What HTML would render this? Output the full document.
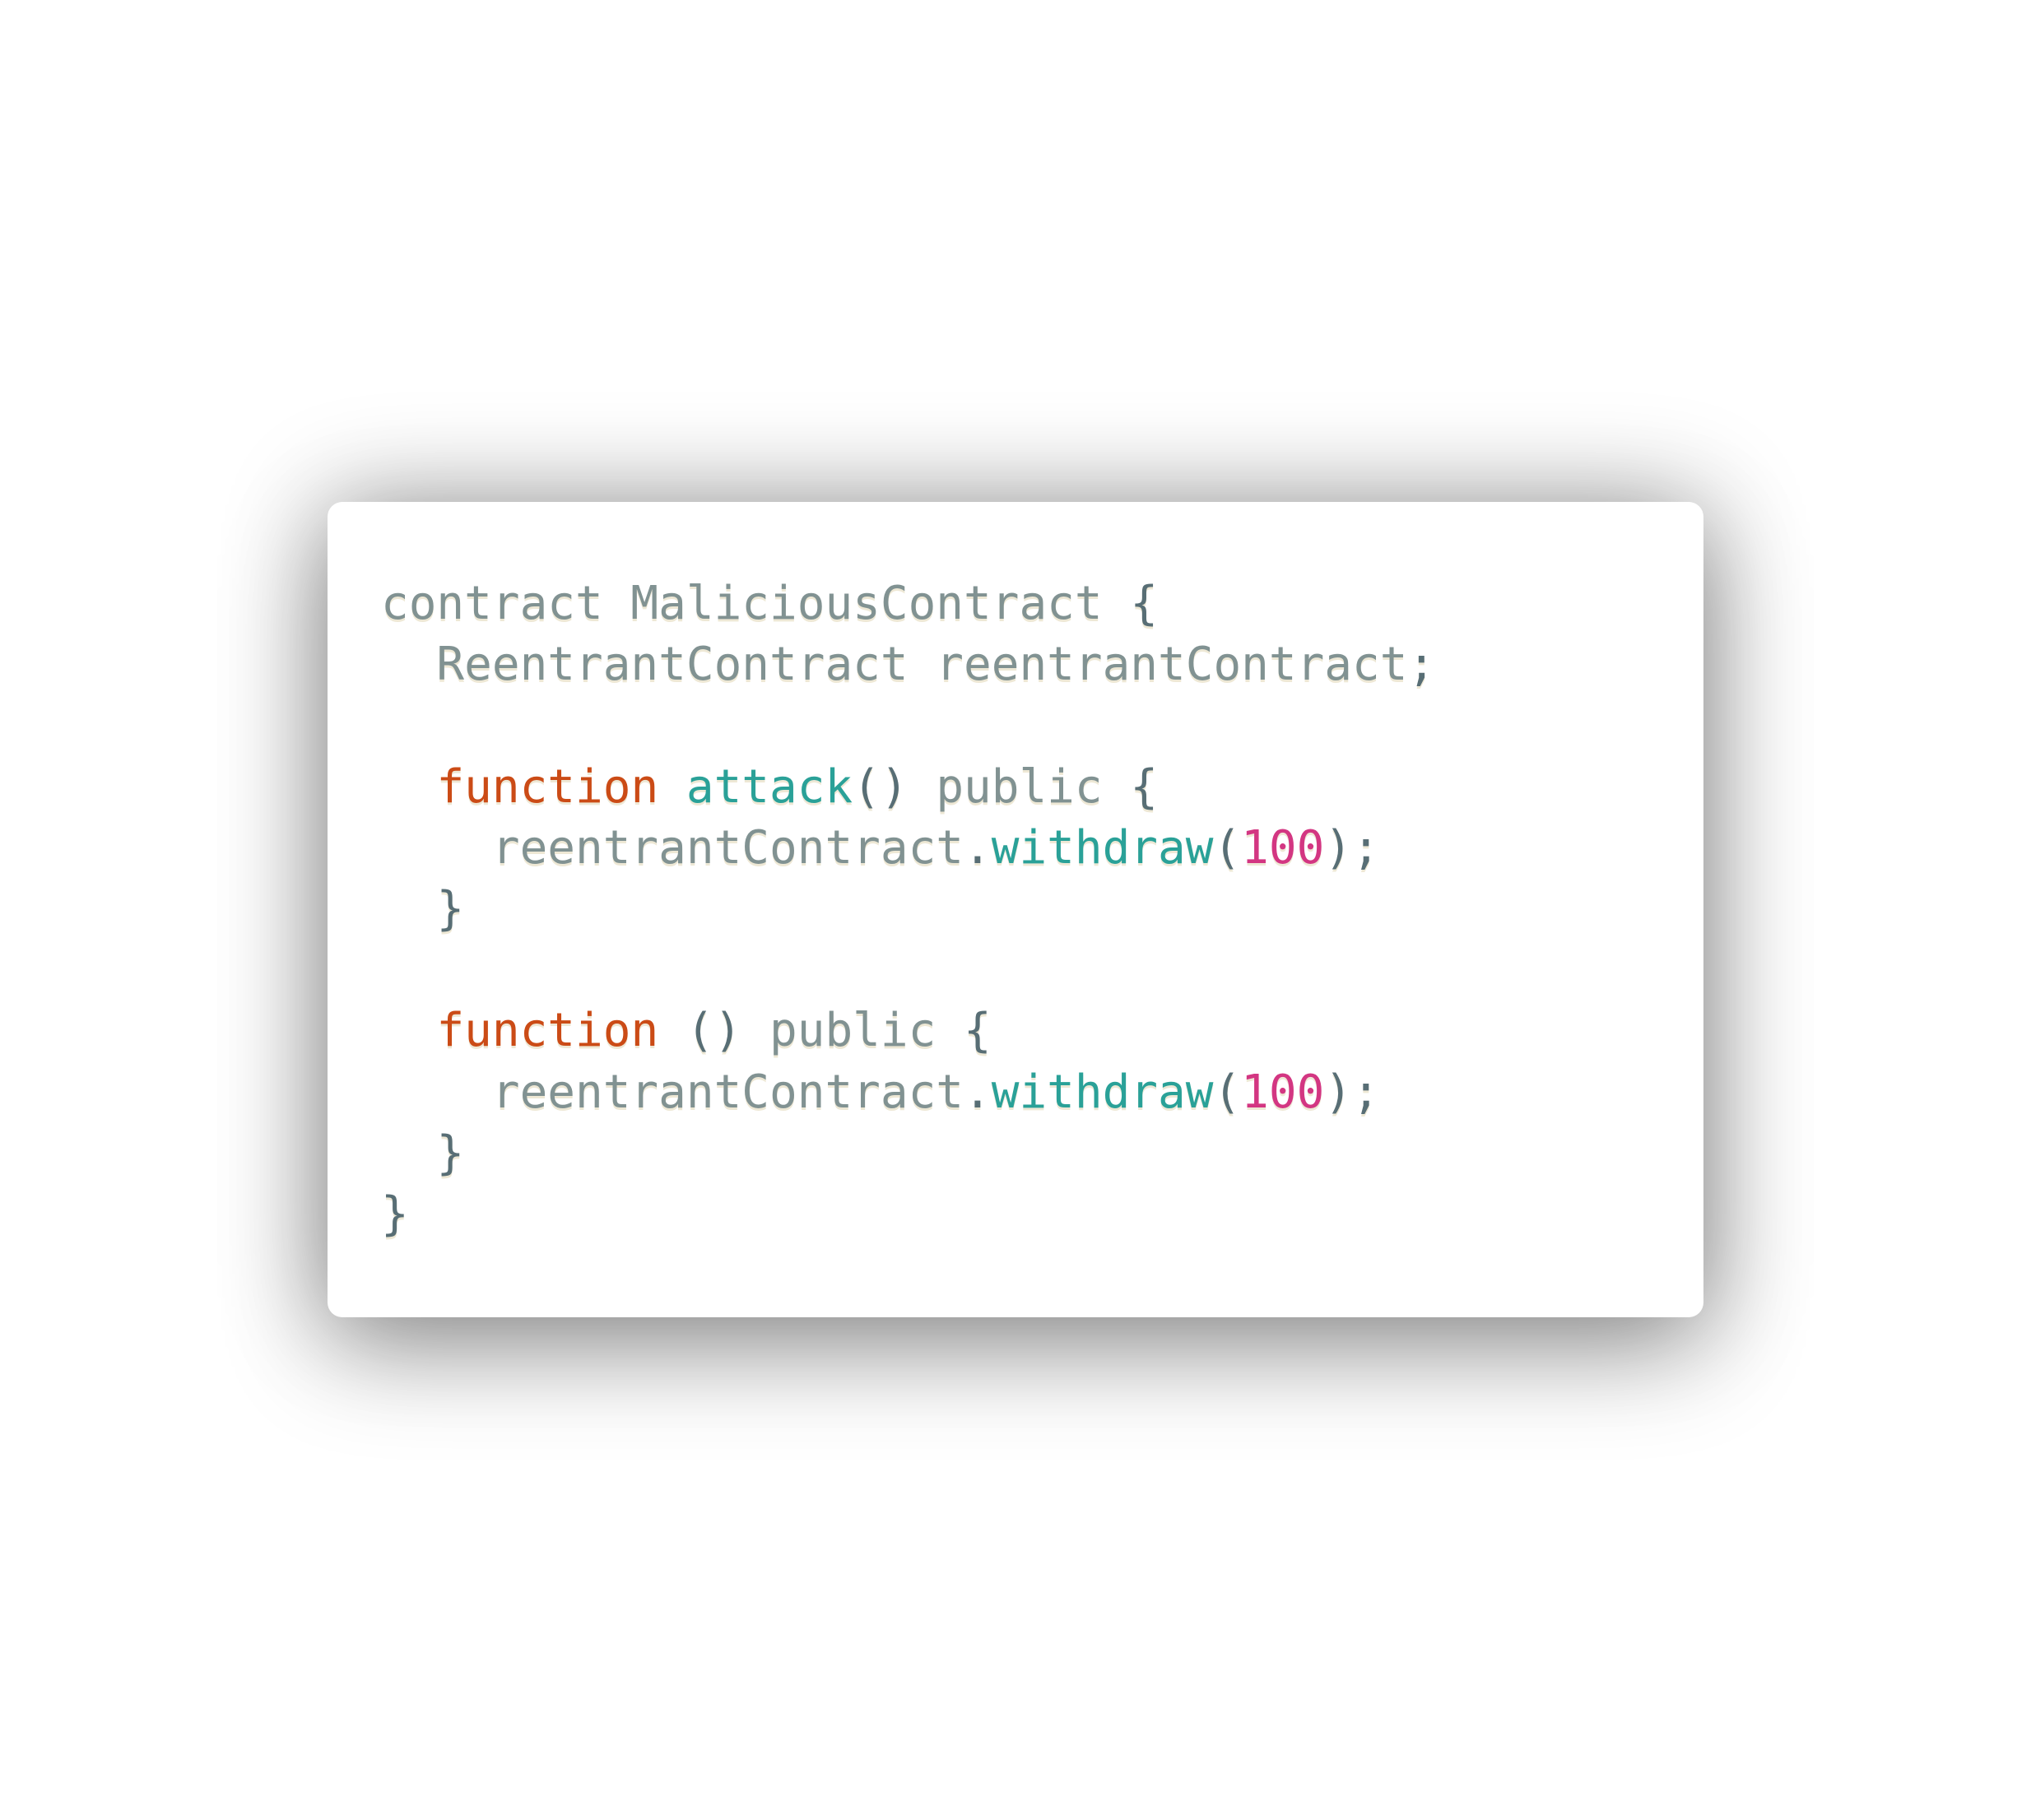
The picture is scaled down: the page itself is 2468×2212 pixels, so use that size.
<!DOCTYPE html>
<html><head><meta charset="utf-8"><style>
html,body{margin:0;padding:0;background:#fff;width:2468px;height:2212px;overflow:hidden}
.card{position:absolute;left:398px;top:610px;width:1672px;height:991px;background:#fff;border-radius:18px;
box-shadow:0 0 220px rgba(0,0,0,0.32),0 40px 160px rgba(0,0,0,0.3);}
pre{position:absolute;left:463px;top:697px;margin:0;font-family:"DejaVu Sans Mono","Liberation Mono",monospace;
font-size:56px;line-height:74.2px;color:#819292;text-shadow:0 3px 0 #eee8d5;}
.p{color:#586e75}.k{color:#cb4b16}.f{color:#2aa198}.n{color:#d33682}
</style></head><body>
<div class="card"></div>
<pre>contract MaliciousContract <span class="p">{</span>
  ReentrantContract reentrantContract<span class="p">;</span>

  <span class="k">function</span> <span class="f">attack</span><span class="p">()</span> public <span class="p">{</span>
    reentrantContract<span class="p">.</span><span class="f">withdraw</span><span class="p">(</span><span class="n">100</span><span class="p">);</span>
  <span class="p">}</span>

  <span class="k">function</span> <span class="p">()</span> public <span class="p">{</span>
    reentrantContract<span class="p">.</span><span class="f">withdraw</span><span class="p">(</span><span class="n">100</span><span class="p">);</span>
  <span class="p">}</span>
<span class="p">}</span></pre>
</body></html>
